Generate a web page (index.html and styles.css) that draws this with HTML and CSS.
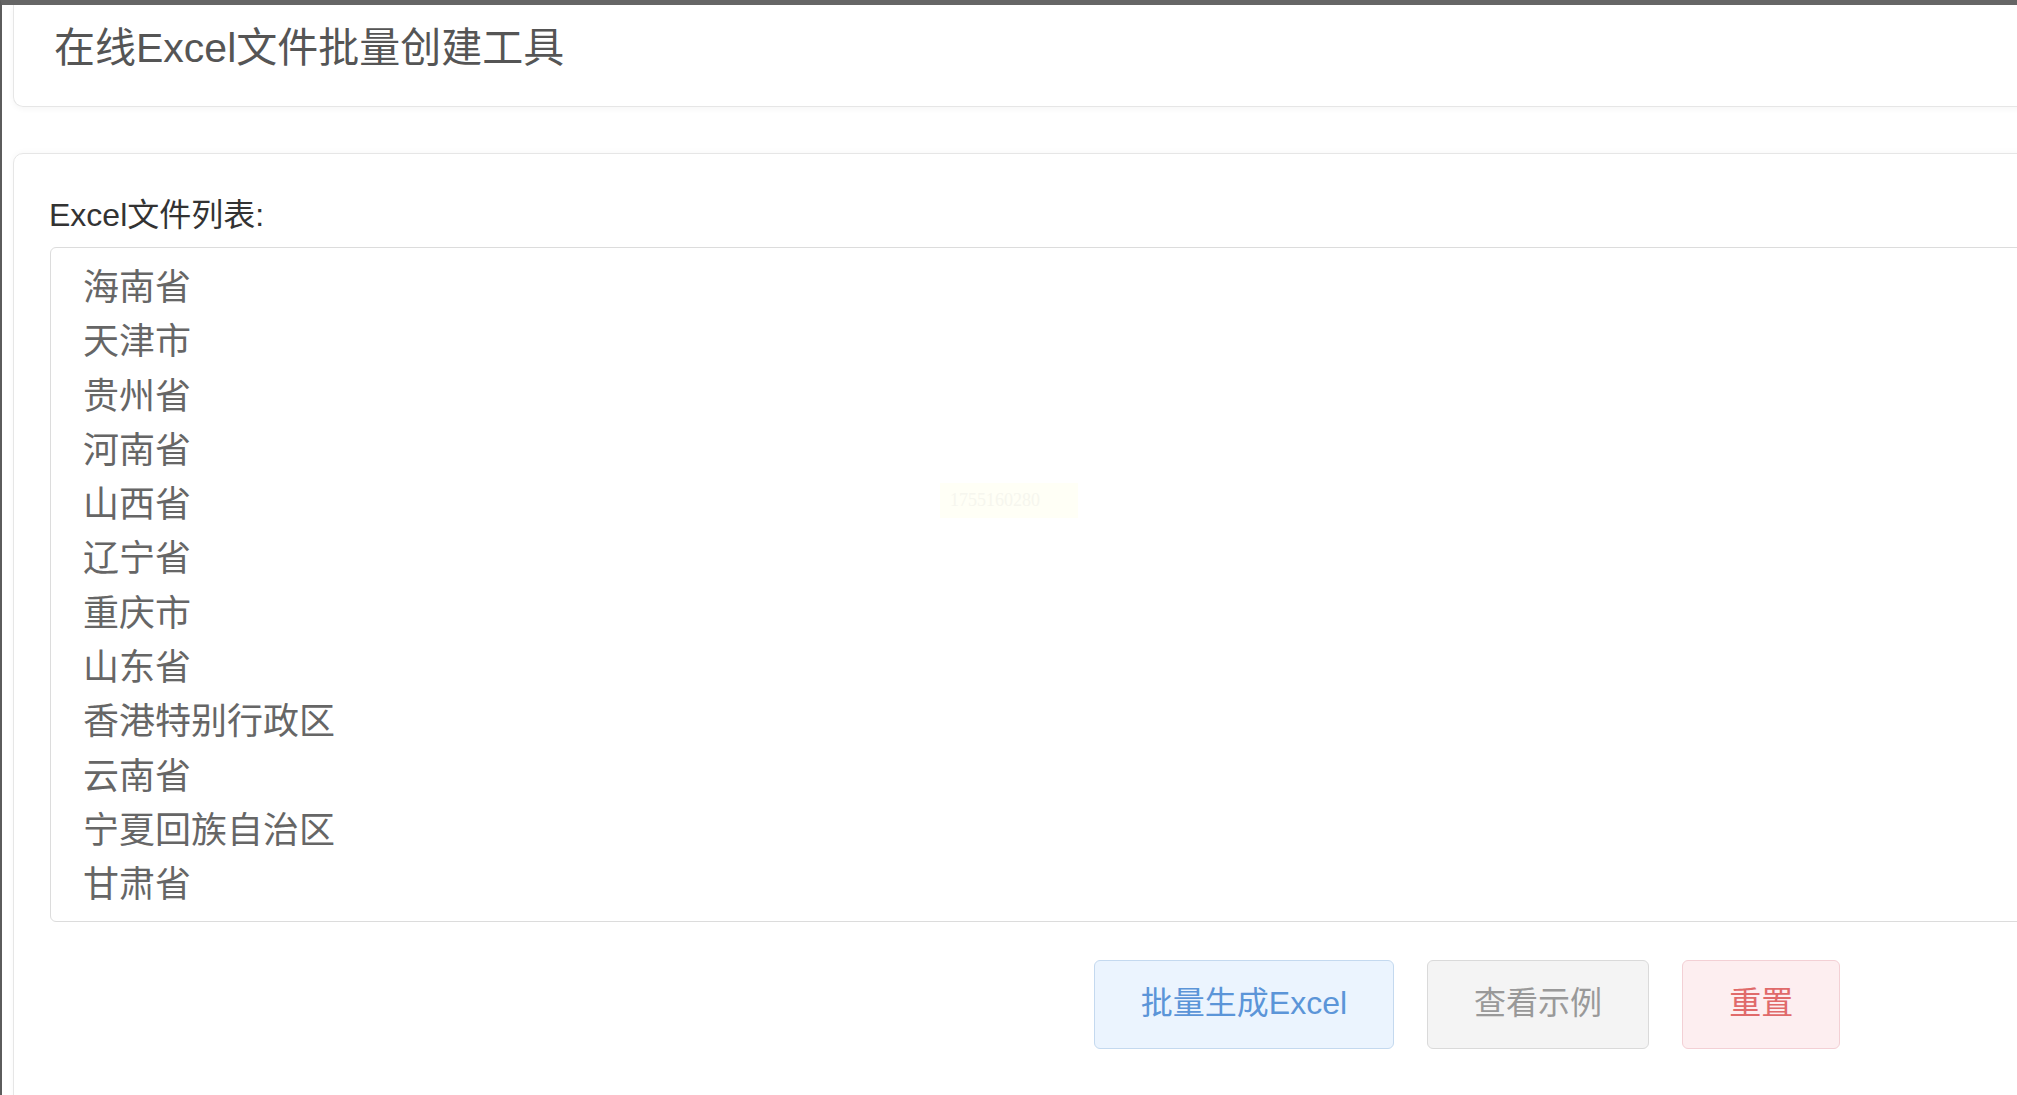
FILE: index.html
```html
<!DOCTYPE html>
<html lang="zh-CN">
<head>
    <meta charset="UTF-8">
    <meta name="viewport" content="width=device-width, initial-scale=1.0">
    <title>在线Excel文件批量创建工具</title>
    <link rel="stylesheet" href="styles.css">
</head>
<body>
    <div class="page">
        <div class="header">
            <h1>在线Excel文件批量创建工具</h1>
        </div>

        <div class="panel">
            <label for="fileList">Excel文件列表:</label>
            <textarea id="fileList" spellcheck="false">海南省
天津市
贵州省
河南省
山西省
辽宁省
重庆市
山东省
香港特别行政区
云南省
宁夏回族自治区
甘肃省</textarea>

            <div class="button-group">
                <button class="btn btn-primary">批量生成Excel</button>
                <button class="btn btn-default">查看示例</button>
                <button class="btn btn-danger">重置</button>
            </div>
        </div>
    </div>

    <div class="watermark">1755160280</div>
</body>
</html>
```

FILE: styles.css
```css
* {
    margin: 0;
    padding: 0;
    box-sizing: border-box;
}

html, body {
    overflow: hidden;
}

body {
    font-family: "Liberation Sans", "Noto Sans CJK SC", sans-serif;
    background: #fff;
    border-top: 5px solid #666;
    border-left: 2px solid #5c5c5c;
    min-height: 100vh;
}

.page {
    width: 2920px;
    padding-left: 11px;
}

.header {
    height: 102px;
    padding: 19px 40px 0;
    border: 1px solid #e6e6e6;
    border-top: none;
    border-radius: 0 0 10px 10px;
    box-shadow: 0 2px 6px rgba(0, 0, 0, 0.04);
}

.header h1 {
    font-size: 41px;
    line-height: 48px;
    font-weight: normal;
    color: #555;
}

.panel {
    margin-top: 46px;
    width: 2908px;
    min-height: 1000px;
    padding: 43px 36px 0;
    border: 1px solid #e6e6e6;
    border-radius: 10px;
    box-shadow: 0 -1px 6px rgba(0, 0, 0, 0.03);
}

label {
    display: block;
    font-size: 32px;
    line-height: 36px;
    color: #333;
    margin-left: -1px;
    margin-bottom: 14px;
}

textarea {
    display: block;
    width: 100%;
    height: 675px;
    padding: 13px 32px 0;
    border: 1px solid #dcdcdc;
    border-radius: 6px;
    font-family: "Liberation Sans", "Noto Sans CJK SC", sans-serif;
    font-size: 36px;
    line-height: 54.3px;
    color: #666;
    resize: none;
    overflow: hidden;
    outline: none;
}

.button-group {
    display: flex;
    justify-content: center;
    gap: 33px;
    margin-top: 38px;
}

.btn {
    height: 89px;
    padding: 0 46px 10px;
    border-radius: 6px;
    font-family: "Liberation Sans", "Noto Sans CJK SC", sans-serif;
    font-size: 32px;
    cursor: pointer;
}

.btn-primary {
    background: #ebf4fe;
    border: 1px solid #c4d9ef;
    color: #5b95d8;
}

.btn-default {
    background: #f4f4f4;
    border: 1px solid #dadada;
    color: #999;
}

.btn-danger {
    background: #fdeef0;
    border: 1px solid #f3d0d5;
    color: #e06a6a;
}

.watermark {
    position: absolute;
    left: 940px;
    top: 483px;
    width: 138px;
    height: 35px;
    background: #fffff6;
    color: #f6f6ee;
    font-family: "Liberation Serif", serif;
    font-size: 18px;
    line-height: 35px;
    padding-left: 10px;
}
```
